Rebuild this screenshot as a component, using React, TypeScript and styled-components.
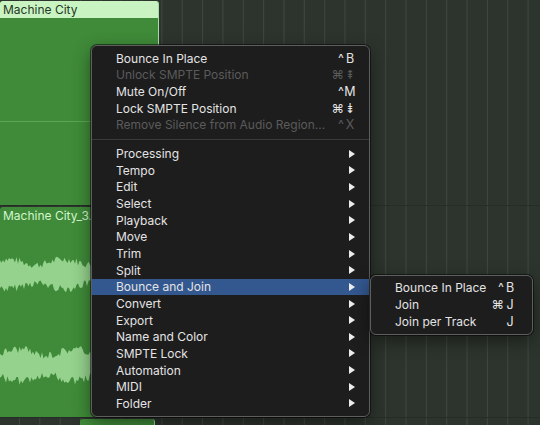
import React from 'react'
import styled, { createGlobalStyle } from 'styled-components'

const GlobalStyle = createGlobalStyle`
  html, body {
    margin: 0;
    padding: 0;
    background: #2d342d;
  }
  * {
    box-sizing: border-box;
  }
`

const Arrange = styled.div`
  position: relative;
  width: 540px;
  height: 425px;
  overflow: hidden;
  display: flex;
  flex-direction: column;
  background-color: #2d342d;
  background-image: linear-gradient(to right, #3f483f 1px, transparent 1px);
  background-size: 20.35px 100%;
  background-position: 19px 0;
  font-family: Inter, 'Liberation Sans', sans-serif;
`

const Lane = styled.div<{ $h: number }>`
  height: ${(p) => p.$h}px;
  flex: none;
  display: flex;
  align-items: flex-start;
  border-bottom: 1px solid #262c26;
`

const Region = styled.div<{ $w: number; $h: number; $offset?: number }>`
  position: relative;
  width: ${(p) => p.$w}px;
  height: ${(p) => p.$h}px;
  margin-left: ${(p) => p.$offset || 0}px;
  margin-top: 1px;
  background: #3f8b39;
  border-right: 1px solid #a9dca2;
  border-radius: 3px 3px 0 0;
  overflow: hidden;
  display: flex;
  flex-direction: column;
`

const RegionHeader = styled.div<{ $filled?: boolean }>`
  height: 17px;
  flex: none;
  padding-left: 3px;
  font-size: 12px;
  line-height: 17px;
  white-space: nowrap;
  color: ${(p) => (p.$filled ? '#263826' : '#d3f5cd')};
  background: ${(p) => (p.$filled ? '#c9f4c2' : 'transparent')};
`

const CenterLine = styled.div`
  margin-top: 103px;
  height: 1px;
  background: #5aa653;
`

const Wave = styled.svg`
  display: block;
  flex: none;
`

const Menu = styled.div`
  position: absolute;
  left: 91px;
  top: 45px;
  width: 279px;
  padding: 4px 0;
  background: #1d1d1d;
  border: 1px solid #5e5e5e;
  border-radius: 6px;
  box-shadow: 0 0 0 1px rgba(0, 0, 0, 0.5), 0 6px 18px rgba(0, 0, 0, 0.45);
`

const SubMenu = styled(Menu)`
  left: 100%;
  top: -4px;
  width: 163px;
  margin-left: 1px;
`

const Row = styled.div<{ $disabled?: boolean; $active?: boolean; $padRight?: number }>`
  position: relative;
  height: 16.67px;
  display: flex;
  align-items: center;
  padding-left: 24px;
  padding-right: ${(p) => p.$padRight ?? 13}px;
  font-size: 12px;
  white-space: nowrap;
  color: ${(p) => (p.$disabled ? '#5b5b5b' : '#e4e4e4')};
  background: ${(p) => (p.$active ? '#33578f' : 'transparent')};
`

const Label = styled.span`
  flex: 1;
`

const Shortcut = styled.span`
  display: flex;
  align-items: center;
  font-family: Inter, 'DejaVu Sans', sans-serif;
`

const Mod = styled.span`
  font-size: 12.5px;
`

const Key = styled.span`
  display: inline-block;
  min-width: 12px;
  text-align: center;
  font-size: 12.5px;
`

const Arrow = styled.span`
  width: 0;
  height: 0;
  margin-right: 1px;
  border-top: 4px solid transparent;
  border-bottom: 4px solid transparent;
  border-left: 6px solid #ececec;
`

const Separator = styled.div`
  height: 1px;
  margin: 6px 0 5px;
  background: #3a3a3a;
`

type Item = { label: string; mod?: string; key?: string; disabled?: boolean }

const topItems: Item[] = [
  { label: 'Bounce In Place', mod: '^', key: 'B' },
  { label: 'Unlock SMPTE Position', mod: '⌘', key: '⇞', disabled: true },
  { label: 'Mute On/Off', mod: '^', key: 'M' },
  { label: 'Lock SMPTE Position', mod: '⌘', key: '⇟' },
  { label: 'Remove Silence from Audio Region...', mod: '^', key: 'X', disabled: true },
]

const subItems = [
  'Processing',
  'Tempo',
  'Edit',
  'Select',
  'Playback',
  'Move',
  'Trim',
  'Split',
  'Bounce and Join',
  'Convert',
  'Export',
  'Name and Color',
  'SMPTE Lock',
  'Automation',
  'MIDI',
  'Folder',
]

const joinItems: Item[] = [
  { label: 'Bounce In Place', mod: '^', key: 'B' },
  { label: 'Join', mod: '⌘', key: 'J' },
  { label: 'Join per Track', key: 'J' },
]

// jagged audio envelope around a centre line
const wavePath = (width: number, cy: number, amp: number, seed: number) => {
  let s = seed
  const rand = () => {
    s = (s * 9301 + 49297) % 233280
    return s / 233280
  }
  const top: string[] = []
  const bottom: string[] = []
  for (let x = 0; x <= width; x += 1.5) {
    const base = amp * (0.75 + 0.2 * Math.sin(x / 9 + seed))
    const up = base + (rand() - 0.3) * amp * 0.55
    const down = base + (rand() - 0.3) * amp * 0.55
    top.push(`${x.toFixed(1)},${(cy - up).toFixed(1)}`)
    bottom.unshift(`${x.toFixed(1)},${(cy + down).toFixed(1)}`)
  }
  return `M${top.join(' L')} L${bottom.join(' L')} Z`
}

const Shortcuts = ({ mod, keyChar }: { mod?: string; keyChar?: string }) => (
  <Shortcut>
    {mod && <Mod>{mod}</Mod>}
    <Key>{keyChar}</Key>
  </Shortcut>
)

const App = () => {
  return (
    <>
      <GlobalStyle />
      <Arrange>
        <Lane $h={206}>
          <Region $w={159} $h={204}>
            <RegionHeader $filled>Machine City</RegionHeader>
            <CenterLine />
          </Region>
        </Lane>
        <Lane $h={212}>
          <Region $w={160} $h={210}>
            <RegionHeader>Machine City_3.3</RegionHeader>
            <Wave width={160} height={190} viewBox="0 0 160 190">
              <path d={wavePath(160, 50, 14, 7)} fill="#95d28d" />
              <path d={wavePath(160, 141, 15, 31)} fill="#95d28d" />
            </Wave>
          </Region>
        </Lane>
        <Lane $h={10}>
          <Region $w={75} $h={10} $offset={80} />
        </Lane>

        <Menu>
          {topItems.map((item) => (
            <Row key={item.label} $disabled={item.disabled}>
              <Label>{item.label}</Label>
              <Shortcuts mod={item.mod} keyChar={item.key} />
            </Row>
          ))}
          <Separator />
          {subItems.map((label) => (
            <Row key={label} $active={label === 'Bounce and Join'}>
              <Label>{label}</Label>
              <Arrow />
              {label === 'Bounce and Join' && (
                <SubMenu>
                  {joinItems.map((item) => (
                    <Row key={item.label} $padRight={16}>
                      <Label>{item.label}</Label>
                      <Shortcuts mod={item.mod} keyChar={item.key} />
                    </Row>
                  ))}
                </SubMenu>
              )}
            </Row>
          ))}
        </Menu>
      </Arrange>
    </>
  )
}

export default App
